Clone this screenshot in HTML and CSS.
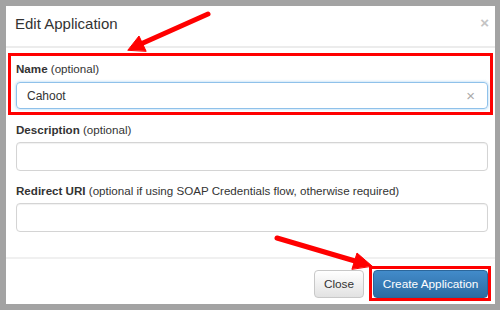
FILE: index.html
```html
<!DOCTYPE html>
<html lang="en">
<head>
  <meta charset="UTF-8">
  <meta name="viewport" content="width=device-width, initial-scale=1.0">
  <title>Edit Application</title>
  <link rel="stylesheet" href="styles.css">
</head>
<body>
  <div class="frame">
    <div class="modal">
      <div class="modal-header">
        <h1>Edit Application</h1>
        <span class="close-x">&times;</span>
      </div>

      <div class="modal-body">
        <div class="highlight name-group">
          <label class="field-label"><b>Name</b> (optional)</label>
          <div class="input focused">
            <span>Cahoot</span>
            <span class="clear-x">&times;</span>
          </div>
        </div>

        <div class="field first">
          <label class="field-label"><b>Description</b> (optional)</label>
          <div class="input"></div>
        </div>

        <div class="field">
          <label class="field-label"><b>Redirect URI</b> (optional if using SOAP Credentials flow, otherwise required)</label>
          <div class="input"></div>
        </div>
      </div>

      <div class="modal-footer">
        <button class="btn btn-default">Close</button>
        <span class="highlight btn-wrap">
          <button class="btn btn-primary">Create Application</button>
        </span>
      </div>
    </div>
  </div>

  <svg class="arrows" width="500" height="310" viewBox="0 0 500 310">
    <g fill="#f00" stroke="#f00" stroke-linecap="round">
      <line x1="208" y1="14" x2="143" y2="43" stroke-width="5" />
      <polygon points="128,50 139,36 146,51" stroke-width="1" stroke-linejoin="round" />
      <line x1="277" y1="238" x2="355" y2="261" stroke-width="5" />
      <polygon points="372,266 357,253 352,269" stroke-width="1" stroke-linejoin="round" />
    </g>
  </svg>
</body>
</html>
```

FILE: styles.css
```css
body {
  margin: 0;
  font-family: "Liberation Sans", Arial, sans-serif;
  color: #333;
  background-color: #a3a3a3;
}

.frame {
  width: 500px;
  height: 310px;
  box-sizing: border-box;
  padding: 6px 5px 6px 6px;
}

.modal {
  background-color: #fff;
  height: 298px;
  display: flex;
  flex-direction: column;
}

.modal-header {
  height: 42px;
  box-sizing: border-box;
  display: flex;
  align-items: flex-start;
  justify-content: space-between;
  padding: 9px 9px 0 9px;
  border-bottom: 2px solid #ececec;
}

.modal-header h1 {
  margin: 0;
  font-size: 15px;
  line-height: 17px;
  font-weight: normal;
  color: #333;
}

.close-x {
  color: #c4c4c4;
  font-size: 15px;
  line-height: 17px;
  font-weight: bold;
  margin-right: -3px;
  margin-top: -1px;
}

.modal-body {
  padding: 5px 2px 0 2px;
}

.highlight {
  border: 3px solid #f00;
}

.name-group {
  padding: 6px 2px 3px 5px;
}

.field {
  padding: 13px 5px 0 8px;
}

.field.first {
  padding-top: 8px;
}

.field-label {
  display: block;
  font-size: 11.6px;
  line-height: 14px;
  margin-bottom: 5px;
}

.name-group .field-label {
  margin-bottom: 6px;
}

.input {
  height: 29px;
  box-sizing: border-box;
  border: 1px solid #d4d4d4;
  border-radius: 4px;
  box-shadow: inset 0 1px 1px rgba(0, 0, 0, 0.06);
  display: flex;
  align-items: center;
  justify-content: space-between;
  padding: 0 12px 0 10px;
  font-size: 12px;
}

.input.focused {
  height: 27px;
  border-color: #8fc1ea;
  box-shadow: 0 0 3px rgba(102, 175, 233, 0.6);
}

.clear-x {
  color: #aaa;
  font-size: 15px;
}

.modal-footer {
  margin-top: 25px;
  border-top: 2px solid #f0f0f0;
  display: flex;
  justify-content: flex-end;
  align-items: center;
  gap: 5px;
  padding: 7px 4px 0 0;
}

.btn {
  height: 28px;
  box-sizing: border-box;
  font-family: "Liberation Sans", Arial, sans-serif;
  font-size: 11.8px;
  border-radius: 4px;
  padding: 0 10px;
  cursor: pointer;
}

.btn-default {
  width: 50px;
  padding: 0;
  color: #333;
  border: 1px solid #c8c8c8;
  background: linear-gradient(#fff, #e2e2e2);
}

.btn-wrap {
  display: flex;
  padding: 1px 0 0 1px;
}

.btn-primary {
  width: 115px;
  padding: 0;
  color: #fff;
  border: 1px solid #2b669a;
  background: linear-gradient(#428bca, #2d6ca2);
}

.arrows {
  position: absolute;
  top: 0;
  left: 0;
  pointer-events: none;
}
```
